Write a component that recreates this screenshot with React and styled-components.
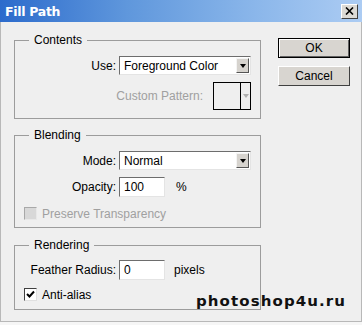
import React from 'react'
import styled, { createGlobalStyle } from 'styled-components'

const GlobalStyle = createGlobalStyle`
    html, body {
        margin: 0;
        padding: 0;
        background: #f6f6f6;
    }
    body {
        font-family: "Liberation Sans", Arial, sans-serif;
        font-size: 12px;
        color: #000;
    }
`

const Window = styled.div`
    position: relative;
    width: 362px;
    height: 322px;
    box-sizing: border-box;
    background: #efefef;
    border: 1px solid #b8b8b8;
    border-top: none;
    display: flex;
    flex-direction: column;
`

const TitleBar = styled.div`
    height: 22px;
    margin: 0 -1px;
    background: linear-gradient(to right, #2c6bcc 0%, #5f97dc 35%, #8ab6ea 70%, #acccf3 100%);
    display: flex;
    align-items: center;
    justify-content: space-between;
    padding: 0 4px 0 5px;
`

const Title = styled.span`
    color: #fff;
    font-family: "DejaVu Sans", Tahoma, sans-serif;
    font-weight: bold;
    font-size: 12.5px;
    letter-spacing: -0.3px;
`

const CloseButton = styled.div`
    width: 15px;
    height: 13px;
    background: #dcdad5;
    border: 1px solid;
    border-color: #fff #404040 #404040 #fff;
    display: flex;
    align-items: center;
    justify-content: center;
`

const Body = styled.div`
    display: flex;
    padding: 11px 0 0 13px;
`

const LeftColumn = styled.div`
    width: 247px;
    display: flex;
    flex-direction: column;
`

const RightColumn = styled.div`
    margin: 5px 0 0 17px;
    display: flex;
    flex-direction: column;
    gap: 8px;
`

const Group = styled.fieldset`
    margin: ${(p) => p.$top || 0}px 0 0 0;
    padding: ${(p) => p.$pad || '9px 0 8px 0'};
    border: 1px solid #9c9c9c;
    min-width: 0;
`

const Legend = styled.legend`
    margin-left: 14px;
    padding: 0 5px;
    line-height: 14px;
    font-size: 12px;
`

const Rows = styled.div`
    display: grid;
    grid-template-columns: 101px 1fr;
    column-gap: 3px;
    row-gap: ${(p) => p.$gap || 7}px;
    align-items: center;
`

const Label = styled.span`
    text-align: right;
    color: ${(p) => (p.$disabled ? '#a0a0a0' : '#000')};
`

const FieldCell = styled.div`
    display: flex;
    align-items: center;
    gap: ${(p) => p.$gap || 10}px;
`

const WideRow = styled.div`
    grid-column: 1 / 3;
    display: flex;
    align-items: center;
    justify-content: ${(p) => (p.$end ? 'flex-end' : 'flex-start')};
    gap: ${(p) => (p.$end ? 10 : 9)}px;
    padding-left: ${(p) => (p.$end ? 0 : 9)}px;
    padding-right: ${(p) => (p.$end ? 9 : 0)}px;
    height: ${(p) => p.$h || 19}px;
`

const Select = styled.div`
    width: 132px;
    height: 19px;
    box-sizing: border-box;
    background: #fff;
    border: 1px solid;
    border-color: #6d6d6d #e4e4e4 #e4e4e4 #6d6d6d;
    display: flex;
    align-items: center;
    justify-content: space-between;
    padding: 0 1px 0 4px;
`

const DropButton = styled.div`
    width: 13px;
    height: 15px;
    box-sizing: border-box;
    background: #d6d3ce;
    border: 1px solid;
    border-color: #f4f4f4 #555 #555 #f4f4f4;
    display: flex;
    align-items: center;
    justify-content: center;
`

const Arrow = styled.div`
    width: 0;
    height: 0;
    border-left: 3.5px solid transparent;
    border-right: 3.5px solid transparent;
    border-top: 4px solid ${(p) => p.$color || '#000'};
`

const PatternBox = styled.div`
    width: 38px;
    height: 28px;
    box-sizing: border-box;
    border: 1px solid #000;
    display: flex;
`

const PatternSwatch = styled.div`
    width: 26px;
    border-right: 1px solid #000;
`

const PatternArrow = styled.div`
    flex: 1;
    display: flex;
    align-items: center;
    justify-content: center;
`

const TextInput = styled.div`
    width: 46px;
    height: 20px;
    box-sizing: border-box;
    background: #fff;
    border: 1px solid;
    border-color: #6d6d6d #e4e4e4 #e4e4e4 #6d6d6d;
    padding: 0 4px;
    display: flex;
    align-items: center;
`

const CheckBox = styled.div`
    width: 13px;
    height: 13px;
    box-sizing: border-box;
    background: ${(p) => (p.$disabled ? '#d8d8d8' : '#fff')};
    border: 1px solid;
    border-color: ${(p) => (p.$disabled ? '#a8a8a8 #e8e8e8 #e8e8e8 #a8a8a8' : '#404040 #e0e0e0 #e0e0e0 #404040')};
    display: flex;
    align-items: center;
    justify-content: center;
`

const CheckLabel = styled.span`
    color: ${(p) => (p.$disabled ? '#a0a0a0' : '#000')};
    margin-left: -4px;
`

const Button = styled.div`
    width: 72px;
    height: 20px;
    box-sizing: border-box;
    background: #d8d5d0;
    border: 1px solid;
    border-color: ${(p) => (p.$default ? '#000' : '#fff #404040 #404040 #fff')};
    box-shadow: ${(p) => (p.$default ? 'inset 1px 1px 0 #fff, inset -1px -1px 0 #606060' : 'none')};
    display: flex;
    align-items: center;
    justify-content: center;
    font-size: 12px;
`

const Watermark = styled.div`
    position: absolute;
    left: 195px;
    top: 293px;
    font-family: "DejaVu Sans", sans-serif;
    font-weight: bold;
    font-size: 15px;
    letter-spacing: 1.1px;
    color: #111;
    transform: scaleY(0.9);
    transform-origin: left top;
`

const App = () => {
    return (
        <>
            <GlobalStyle />
            <Window>
                <TitleBar>
                    <Title>Fill Path</Title>
                    <CloseButton>
                        <svg width="9" height="8" viewBox="0 0 9 8">
                            <path d="M1 0.5 L8 7.5 M8 0.5 L1 7.5" stroke="#000" strokeWidth="1.6" />
                        </svg>
                    </CloseButton>
                </TitleBar>
                <Body>
                    <LeftColumn>
                        <Group>
                            <Legend>Contents</Legend>
                            <Rows>
                                <Label>Use:</Label>
                                <FieldCell>
                                    <Select>
                                        <span>Foreground Color</span>
                                        <DropButton><Arrow /></DropButton>
                                    </Select>
                                </FieldCell>
                                <WideRow $end $h={28}>
                                    <Label $disabled>Custom Pattern:</Label>
                                    <PatternBox>
                                        <PatternSwatch />
                                        <PatternArrow><Arrow $color="#b0b0b0" /></PatternArrow>
                                    </PatternBox>
                                </WideRow>
                            </Rows>
                        </Group>
                        <Group $top={9} $pad="9px 0 4px 0">
                            <Legend>Blending</Legend>
                            <Rows $gap={7}>
                                <Label>Mode:</Label>
                                <FieldCell>
                                    <Select>
                                        <span>Normal</span>
                                        <DropButton><Arrow /></DropButton>
                                    </Select>
                                </FieldCell>
                                <Label>Opacity:</Label>
                                <FieldCell $gap={11}>
                                    <TextInput>100</TextInput>
                                    <span>%</span>
                                </FieldCell>
                                <WideRow>
                                    <CheckBox $disabled />
                                    <CheckLabel $disabled>Preserve Transparency</CheckLabel>
                                </WideRow>
                            </Rows>
                        </Group>
                        <Group $top={10} $pad="8px 0 5px 0">
                            <Legend>Rendering</Legend>
                            <Rows $gap={5}>
                                <Label>Feather Radius:</Label>
                                <FieldCell $gap={9}>
                                    <TextInput>0</TextInput>
                                    <span>pixels</span>
                                </FieldCell>
                                <WideRow>
                                    <CheckBox>
                                        <svg width="9" height="9" viewBox="0 0 9 9">
                                            <path d="M1 4 L3.5 6.5 L8 1.5" fill="none" stroke="#000" strokeWidth="2" />
                                        </svg>
                                    </CheckBox>
                                    <CheckLabel>Anti-alias</CheckLabel>
                                </WideRow>
                            </Rows>
                        </Group>
                    </LeftColumn>
                    <RightColumn>
                        <Button $default>OK</Button>
                        <Button>Cancel</Button>
                    </RightColumn>
                </Body>
                <Watermark>photoshop4u.ru</Watermark>
            </Window>
        </>
    )
}

export default App
